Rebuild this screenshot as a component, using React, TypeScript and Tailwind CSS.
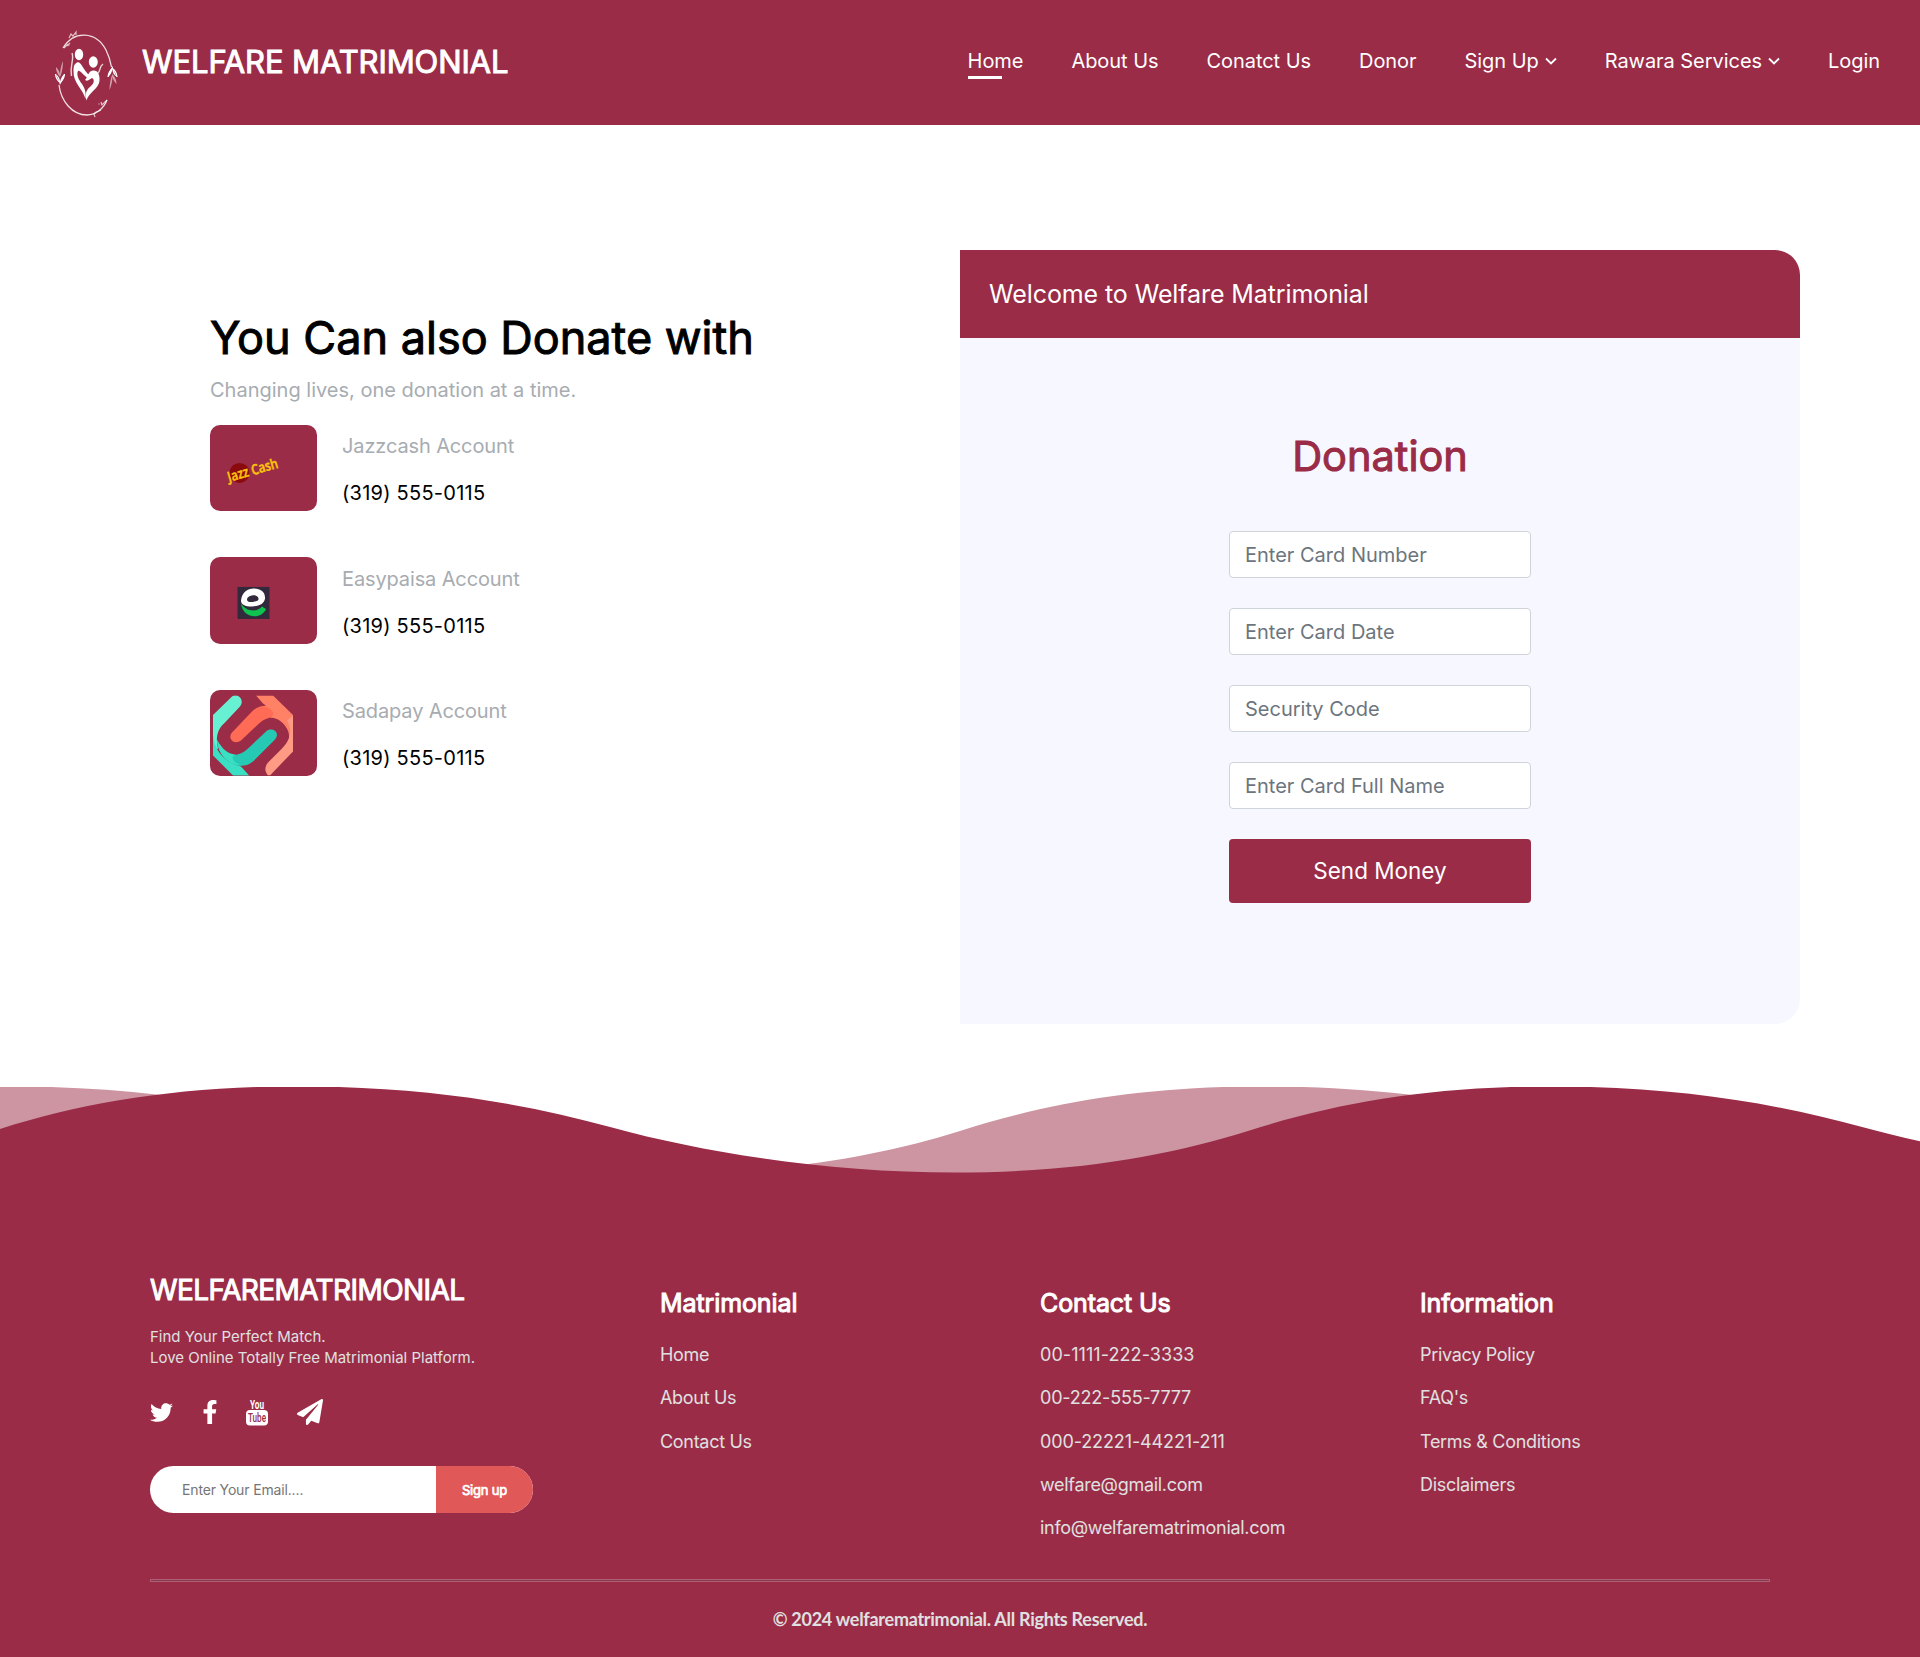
import React from "react";
import { FaTwitter, FaFacebookF, FaPaperPlane } from "react-icons/fa";

function Leaf({ transform }: { transform: string }) {
  return (
    <g transform={transform} fill="#fff">
      <path d="M0 13C-1 9-2 6-4.500 2C-1 4 0 7 0 10C1 6 2 4 4.500 2C4 7 2 9 0 13Z" />
      <path d="M0 5C-2 2-4 0-4-5C-1-2 0 1 0 3C0-2 1-6 3-11C3-6 2 1 0 5Z" opacity=".55" />
      <path d="M-.5 10C-3 8-4 6-4.500 2M.5 10C3 8 4 6 4.500 2" stroke="#fff" strokeWidth="1.300" fill="none" />
    </g>
  );
}

function Logo() {
  return (
    <svg className="h-[94px] w-[74px]" viewBox="0 0 74 94" fill="none">
      <path d="M13 20C24 2 46 3 56 22C59 28 60.500 33 61.500 39" stroke="#fff" strokeWidth="1.300" opacity=".85" />
      <path d="M9 57C11 73 22 87 37 87C46 87 54 80 57 72" stroke="#fff" strokeWidth="1.300" opacity=".85" />
      <path d="M14 20l4-4M17 18l3-3M19 17.500v.5M19 10l2-4 2 2 3-4v3" stroke="#fff" strokeWidth="1.200" opacity=".7" />
      <path d="M57 72l-5 5-1-3M49 75.500v1M51 82l-2 1-3 1-2 2 1 3" stroke="#fff" strokeWidth="1.200" opacity=".7" />
      <Leaf transform="translate(10 44)" />
      <Leaf transform="translate(62.500 51) rotate(180)" />
      <ellipse cx="29" cy="26.500" rx="4.200" ry="5.700" fill="#fff" />
      <ellipse cx="43.300" cy="34" rx="4.500" ry="5.700" fill="#fff" />
      <path d="M27 34.500C31 33 33 42 40 48L37.500 50C33 47 30 42 28 43C26 47 29 52 32 56C36 62 36 67 35.500 71C33 61 23 55 23.500 43C23.500 39 24 36 27 34.500Z" fill="#fff" />
      <path d="M35 52C38 49 38 43 43 42.500C48 42 50 47 49.500 53C48.500 61 39 64 36.500 72.500C34.500 65 37 61 41 58C44.500 55 44.500 51 42 50C40 51 38 54 35 52Z" fill="#fff" />
      <path d="M22 25C24.500 32 19.500 37 21.500 48" stroke="#fff" strokeWidth="1.400" opacity=".8" />
      <path d="M53 36C49 39 51 42 48 45" stroke="#fff" strokeWidth="1.400" opacity=".8" />
    </svg>
  );
}

function Chevron() {
  return (
    <svg className="ml-1.5 h-[8px] w-[12px]" viewBox="0 0 12 8" fill="none">
      <path d="M1 1.500L6 6.500L11 1.500" stroke="#fff" strokeWidth="1.800" />
    </svg>
  );
}

const nav = [
  { label: "Home", active: true },
  { label: "About Us" },
  { label: "Conatct Us" },
  { label: "Donor" },
  { label: "Sign Up", menu: true },
  { label: "Rawara Services", menu: true },
  { label: "Login" },
];

function Header() {
  return (
    <header className="flex h-[125px] items-start justify-between bg-[#9a2c47] pr-10 pl-[50px] text-white">
      <div className="flex items-start pt-7">
        <Logo />
        <span className="ml-[18px] mt-[12px] text-[31px] leading-[44px] tracking-[-0.1px] whitespace-nowrap [-webkit-text-stroke:1px_#fff]">
          WELFARE MATRIMONIAL
        </span>
      </div>
      <nav className="flex gap-12 pt-[46px] text-[20px] leading-[30px] tracking-[-0.05px]">
        {nav.map((n) => (
          <a key={n.label} className="relative flex items-center whitespace-nowrap">
            {n.label}
            {n.menu && <Chevron />}
            {n.active && <span className="absolute top-[30px] left-0 h-[3px] w-[34px] bg-white" />}
          </a>
        ))}
      </nav>
    </header>
  );
}

function JazzCash() {
  return (
    <svg className="h-full w-full" viewBox="0 0 107 86">
      <circle cx="29.500" cy="47.500" r="10" fill="#8b0a0d" />
      <text
        x="19"
        y="56.500"
        transform="rotate(-16 19 56.500)"
        fontFamily="Open Sans, sans-serif"
        fontWeight="600"
        fontSize="14"
        fill="#fcc30b"
        stroke="#fcc30b"
        strokeWidth=".5"
        textLength="52"
        lengthAdjust="spacingAndGlyphs"
      >
        Jazz Cash
      </text>
    </svg>
  );
}

function Easypaisa() {
  return (
    <svg className="h-full w-full" viewBox="0 0 107 86">
      <rect x="27.500" y="29.500" width="32" height="32" fill="#33293d" />
      <path d="M31 46C35 53 46 56 52 49L56 51.500C52 62 33 62 31 46Z" fill="#0fc24f" />
      <path
        fillRule="evenodd"
        d="M31 43C32 35 37 31 44 31C51 31 55.500 35 55 41C54.500 46 49 49 42 49C35 49 31 47 31 43ZM37 42C37 44.500 40 45 43 44.500C47 44 49 43 48.500 41C48 38.500 45 37.500 42 38C39 38.500 37 40 37 42Z"
        fill="#fff"
      />
    </svg>
  );
}

function Sadapay() {
  return (
    <svg className="h-full w-full" viewBox="0 0 107 86">
      <defs>
        <clipPath id="sada-frame">
          <rect x="3" y="5" width="80" height="80" />
        </clipPath>
      </defs>
      <g clipPath="url(#sada-frame)">
        <path d="M22 6L3 24.500V62L8 58C6 50 6 40 14 33L30 16C35 10 28 2 22 6Z" fill="#67f0d2" />
        <path d="M3 45C5 60 14 72 31 76L40 86H24L3 65Z" fill="#3ae0c4" />
        <path d="M46 5H63L83 24.500V62L79 50C80 40 76 33 66 27C60 18 56 15 53 13Z" fill="#ff8166" />
        <path d="M83 25V61L60 85H58C54 80 55 76 58 72L72 58C80 50 83 40 77 30Z" fill="#ff9a85" />
        <path d="M22 42L42 21C52 11 69 14 77 32C66 24 57 26 49 33L31 50C24 55 17 48 22 42Z" fill="#ff6b55" />
        <path d="M53 16C62 12 78 22 79 42C75 32 67 27 60 27C68 24 60 16 53 16Z" fill="#ff8166" />
        <path d="M65 49L45 69C35 80 18 77 9 59C20 67 30 66 38 58L56 41C62 36 71 42 65 49Z" fill="#25c9b4" />
        <path d="M33 75C20 76 7 64 7 49C12 59 19 64 26 64C18 66 26 75 33 75Z" fill="#3ae0c4" />
      </g>
    </svg>
  );
}

const accounts = [
  { name: "Jazzcash Account", Art: JazzCash },
  { name: "Easypaisa Account", Art: Easypaisa },
  { name: "Sadapay Account", Art: Sadapay },
];

const fields = ["Enter Card Number", "Enter Card Date", "Security Code", "Enter Card Full Name"];

function Donate() {
  return (
    <main className="flex h-[962px] pt-[125px]">
      <section className="w-[960px] pt-[59px] pl-[210px]">
        <h1 className="text-[45px] leading-[58px] whitespace-nowrap text-black [-webkit-text-stroke:1px_#000]">
          You Can also Donate with
        </h1>
        <p className="mt-[8px] text-[20px] leading-[30px] text-[#a7acb1]">Changing lives, one donation at a time.</p>
        <div className="mt-[19.600px] flex flex-col gap-[46px]">
          {accounts.map(({ name, Art }) => (
            <div key={name} className="flex h-[86.500px]">
              <div className="h-[86.900px] w-[107px] shrink-0 overflow-hidden rounded-[10px] bg-[#9a2c47]">
                <Art />
              </div>
              <div className="ml-[25px] pt-[6.650px] text-[20px] leading-[30px]">
                <p className="tracking-[-0.13px] text-[#a7acb1]">{name}</p>
                <p className="mt-[17px] tracking-[0.25px] text-black">(319) 555-0115</p>
              </div>
            </div>
          ))}
        </div>
      </section>
      <section className="flex h-[774px] w-[840px] flex-col overflow-hidden rounded-r-[25px] bg-[#f7f8ff]">
        <div className="flex h-[88px] items-center bg-[#9a2c47] pt-[2px] pl-[29px] text-[25px] tracking-[-0.1px] text-white">
          Welcome to Welfare Matrimonial
        </div>
        <form className="mx-auto flex w-[302px] flex-col pt-[92px]">
          <h2 className="text-center text-[41.500px] leading-[53px] text-[#9a2c47] [-webkit-text-stroke:1px_#9a2c47]">
            Donation
          </h2>
          <div className="mt-[48px] flex flex-col gap-[30px]">
            {fields.map((f) => (
              <input
                key={f}
                placeholder={f}
                className="h-[47px] rounded-[4px] border border-[#ced4da] bg-white px-[15px] text-[20px] placeholder:text-[#6c757d]"
              />
            ))}
            <button type="button" className="h-[64px] rounded-[4px] bg-[#9a2c47] text-[22.500px] text-white">
              Send Money
            </button>
          </div>
        </form>
      </section>
    </main>
  );
}

const wave =
  "M0 42C85 15 180 -.6 298 -.6C420 -.6 520 15 612 40.500C705 66 830 85.600 955 85.600C1080 85.600 1170 68 1248 44C1335 16 1430 -.6 1550 -.6C1672 -.6 1772 15 1864 40.500C1957 66 2082 85.600 2208 85.600V140H0Z";

function Wave() {
  return (
    <svg className="block h-[113px] w-full" viewBox="0 0 1920 113">
      <path d={wave} fill="#cd94a1" transform="translate(-288 0)" />
      <path d={wave} fill="#9a2c47" />
    </svg>
  );
}

function YouTubeStacked() {
  return (
    <svg className="h-[37px] w-[26px]" viewBox="-2 -5 26 37">
      <text x="4" y="9.500" fontFamily="Roboto, sans-serif" fontWeight="700" fontSize="12.500" fill="#fff" textLength="14" lengthAdjust="spacingAndGlyphs">
        You
      </text>
      <rect x="0" y="11" width="22" height="15.500" rx="4" fill="#fff" />
      <text x="2" y="23" fontFamily="Roboto, sans-serif" fontWeight="500" fontSize="12" fill="#9a2c47" textLength="18" lengthAdjust="spacingAndGlyphs">
        Tube
      </text>
    </svg>
  );
}

const columns = [
  { title: "Matrimonial", links: ["Home", "About Us", "Contact Us"] },
  {
    title: "Contact Us",
    links: ["00-1111-222-3333", "00-222-555-7777", "000-22221-44221-211", "welfare@gmail.com", "info@welfarematrimonial.com"],
  },
  { title: "Information", links: ["Privacy Policy", "FAQ's", "Terms & Conditions", "Disclaimers"] },
];

// Numbers are set slightly looser than worded links.
function linkTracking(label: string) {
  if (label.startsWith("000")) return "tracking-[-0.12px]";
  if (label.startsWith("00-1")) return "tracking-[0.07px]";
  if (label.startsWith("00-2")) return "tracking-[-0.2px]";
  return "tracking-[-0.3px]";
}

function Footer() {
  return (
    <footer>
      <Wave />
      <div className="h-[457px] bg-[#9a2c47] px-[150px] pt-[68px] text-white">
        <div className="flex h-[311px]">
          <div className="w-[510px] shrink-0">
            <h3 className="text-[28px] leading-[44px] tracking-[-0.57px] [-webkit-text-stroke:1px_#fff]">WELFAREMATRIMONIAL</h3>
            <p className="mt-[14px] text-[15px] leading-[21px] text-[#e0e0e0]">
              Find Your Perfect Match.
              <br />
              Love Online Totally Free Matrimonial Platform.
            </p>
            <div className="mt-[30px] flex h-[28px] items-center">
              <FaTwitter className="h-[23px] w-[23px]" />
              <FaFacebookF className="ml-[25px] h-[24px] w-[24px]" />
              <span className="ml-[22px]">
                <YouTubeStacked />
              </span>
              <FaPaperPlane className="ml-[27px] h-[26px] w-[26px]" />
            </div>
            <div className="mt-[40px] flex h-[47px] w-[383px] overflow-hidden rounded-full bg-white">
              <input
                placeholder="Enter Your Email...."
                className="w-[286px] pb-[1px] pl-[32px] text-[14px] tracking-[-0.15px] placeholder:text-[#757575]"
              />
              <button type="button" className="w-[97px] bg-[#e15858] pt-[2px] text-[13px] tracking-[-0.2px] [-webkit-text-stroke:0.7px_#fff]">
                Sign up
              </button>
            </div>
          </div>
          {columns.map((c) => (
            <div key={c.title} className="w-[380px] shrink-0 pt-[15px]">
              <h4 className="text-[25px] leading-[40px] tracking-[-0.1px] [-webkit-text-stroke:1px_#fff]">{c.title}</h4>
              <ul className="mt-[18px] text-[18px] text-[#e0e0e0]">
                {c.links.map((l) => (
                  <li key={l} className={`h-[43.300px] leading-[27px] whitespace-nowrap ${linkTracking(l)}`}>
                    {l}
                  </li>
                ))}
              </ul>
            </div>
          ))}
        </div>
        <div className="h-[3px] w-[1620px] border border-[#af5f73] bg-[#86394d]" />
        <p className="mt-[22px] text-center font-[Lato] text-[18px] leading-[30px] font-bold tracking-[-0.27px] text-[#e0e0e0]">
          © 2024 welfarematrimonial. All Rights Reserved.
        </p>
      </div>
    </footer>
  );
}

export default function App() {
  return (
    <div className="h-[1657px] w-[1920px] overflow-hidden bg-white font-[Inter,sans-serif]">
      <Header />
      <Donate />
      <Footer />
    </div>
  );
}
